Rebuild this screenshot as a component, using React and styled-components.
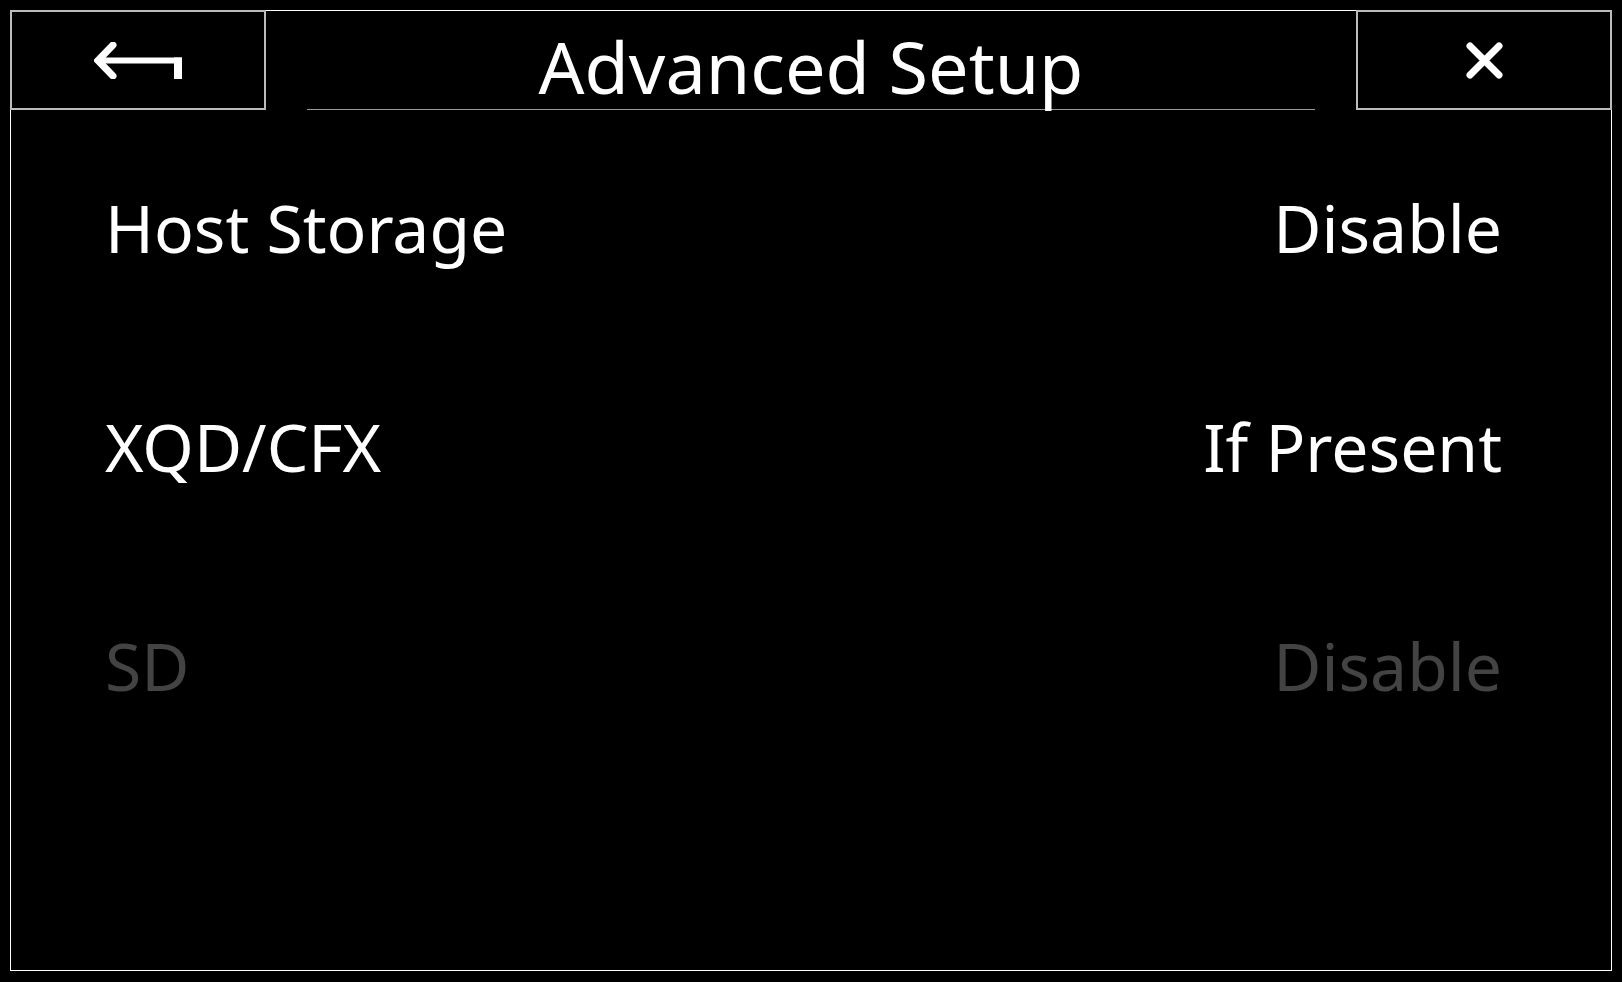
import React from "react";
import styled, { createGlobalStyle } from "styled-components";

const GlobalStyle = createGlobalStyle`
  html, body {
    margin: 0;
    padding: 0;
    background: #000;
  }
  body {
    padding: 10px;
    font-family: "Noto Sans", "Open Sans", "DejaVu Sans", sans-serif;
    color: #fff;
  }
`;

const Frame = styled.div`
  box-sizing: border-box;
  width: 1602px;
  height: 961px;
  border: 1px solid #fff;
  background: #000;
  display: flex;
  flex-direction: column;
`;

const Header = styled.div`
  display: flex;
  height: 100px;
  margin: -1px -1px 0 -1px;
`;

const NavButton = styled.button`
  box-sizing: border-box;
  width: 256px;
  height: 100px;
  flex: none;
  margin: 0;
  padding: 0;
  background: #000;
  border: 2px solid #bcbcbc;
  display: flex;
  align-items: center;
  justify-content: center;
  cursor: pointer;
`;

const Title = styled.h1`
  flex: 1;
  box-sizing: border-box;
  height: 100px;
  margin: 0 41px;
  padding-top: 7px;
  border-bottom: 1px solid #9a9a9a;
  text-align: center;
  font-size: 72px;
  font-weight: 400;
  line-height: normal;
  white-space: nowrap;
`;

const List = styled.div`
  padding: 8px 109px 0 94px;
  display: flex;
  flex-direction: column;
`;

const Row = styled.div`
  display: flex;
  justify-content: space-between;
  height: 219px;
  line-height: 219px;
  font-size: 66px;
  color: ${(p) => (p.$dim ? "#434343" : "#fff")};
  white-space: nowrap;
`;

const BackIcon = () => (
  <svg width="88" height="37" viewBox="0 0 88 37">
    <polyline
      points="19,3 4,18.5 19,34"
      fill="none"
      stroke="#fff"
      strokeWidth="7"
      strokeLinejoin="miter"
      strokeLinecap="round"
    />
    <rect x="5" y="15.5" width="83" height="6" fill="#fff" />
    <rect x="80" y="15.5" width="8" height="21.5" fill="#fff" />
  </svg>
);

const CloseIcon = () => (
  <svg width="37" height="37" viewBox="0 0 37 37">
    <path
      d="M4 4 L33 33 M33 4 L4 33"
      stroke="#fff"
      strokeWidth="7"
      strokeLinecap="round"
    />
  </svg>
);

const rows = [
  { label: "Host Storage", value: "Disable" },
  { label: "XQD/CFX", value: "If Present" },
  { label: "SD", value: "Disable", dim: true },
];

export default function App() {
  return (
    <>
      <GlobalStyle />
      <Frame>
        <Header>
          <NavButton aria-label="Back">
            <BackIcon />
          </NavButton>
          <Title>Advanced Setup</Title>
          <NavButton aria-label="Close">
            <CloseIcon />
          </NavButton>
        </Header>
        <List>
          {rows.map((r) => (
            <Row key={r.label} $dim={r.dim}>
              <span>{r.label}</span>
              <span>{r.value}</span>
            </Row>
          ))}
        </List>
      </Frame>
    </>
  );
}
